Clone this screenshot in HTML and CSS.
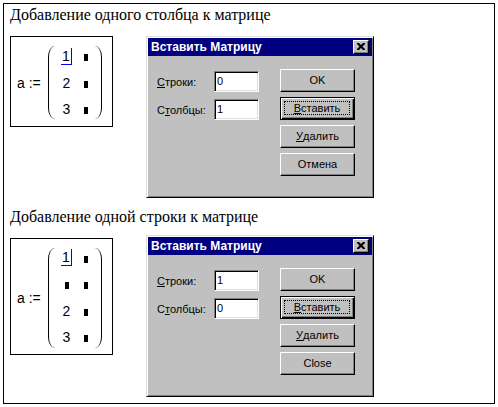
FILE: index.html
```html
<!DOCTYPE html>
<html lang="ru">
<head>
<meta charset="utf-8">
<title>Вставить Матрицу</title>
<link rel="stylesheet" href="styles.css">
</head>
<body>
<div class="frame">
  <section class="example">
    <p class="heading">Добавление одного столбца к матрице</p>
    <div class="row">
      <div class="region">
        <span class="lhs">a :=</span>
        <div class="matrix">
          <div class="paren paren--left"></div>
          <div class="cells">
            <span class="cell"><span class="cursor">1</span></span><span class="cell cell--ph"><i class="ph"></i></span>
            <span class="cell">2</span><span class="cell cell--ph"><i class="ph"></i></span>
            <span class="cell">3</span><span class="cell cell--ph"><i class="ph"></i></span>
          </div>
          <div class="paren paren--right"></div>
        </div>
      </div>
      <div class="dialog">
        <div class="titlebar">
          <span class="title">Вставить Матрицу</span>
          <span class="close"><svg width="8" height="7" viewBox="0 0 8 7"><path d="M0 0h2l2 2 2-2h2v1l-2.5 2.5L8 6v1H6L4 5 2 7H0V6l2.5-2.5L0 1z" fill="#000"/></svg></span>
        </div>
        <div class="body">
          <div class="fields">
            <label class="field"><span class="label"><u>С</u>троки:</span><span class="input">0</span></label>
            <label class="field"><span class="label">С<u>т</u>олбцы:</span><span class="input">1</span></label>
          </div>
          <div class="buttons">
            <span class="btn">OK</span>
            <span class="btn btn--default"><span class="focus"><u>В</u>ставить</span></span>
            <span class="btn"><u>У</u>далить</span>
            <span class="btn">Отмена</span>
          </div>
        </div>
      </div>
    </div>
  </section>
  <section class="example example--second">
    <p class="heading">Добавление одной строки к матрице</p>
    <div class="row">
      <div class="region region--tall">
        <span class="lhs">a :=</span>
        <div class="matrix">
          <div class="paren paren--left"></div>
          <div class="cells">
            <span class="cell"><span class="cursor">1</span></span><span class="cell cell--ph"><i class="ph"></i></span>
            <span class="cell"><i class="ph"></i></span><span class="cell cell--ph"><i class="ph"></i></span>
            <span class="cell">2</span><span class="cell cell--ph"><i class="ph"></i></span>
            <span class="cell">3</span><span class="cell cell--ph"><i class="ph"></i></span>
          </div>
          <div class="paren paren--right"></div>
        </div>
      </div>
      <div class="dialog">
        <div class="titlebar">
          <span class="title">Вставить Матрицу</span>
          <span class="close"><svg width="8" height="7" viewBox="0 0 8 7"><path d="M0 0h2l2 2 2-2h2v1l-2.5 2.5L8 6v1H6L4 5 2 7H0V6l2.5-2.5L0 1z" fill="#000"/></svg></span>
        </div>
        <div class="body">
          <div class="fields">
            <label class="field"><span class="label"><u>С</u>троки:</span><span class="input">1</span></label>
            <label class="field"><span class="label">С<u>т</u>олбцы:</span><span class="input">0</span></label>
          </div>
          <div class="buttons">
            <span class="btn">OK</span>
            <span class="btn btn--default"><span class="focus"><u>В</u>ставить</span></span>
            <span class="btn"><u>У</u>далить</span>
            <span class="btn">Close</span>
          </div>
        </div>
      </div>
    </div>
  </section>
</div>
</body>
</html>
```
FILE: styles.css
```css
html, body {
  margin: 0;
  padding: 0;
  background: #fff;
}

.frame {
  margin: 3px;
  width: 492px;
  height: 401px;
  box-sizing: border-box;
  border: 1px solid #000;
  padding: 2px 6px 0 6px;
}

.example--second {
  margin-top: 10px;
}

.heading {
  margin: 0;
  font-family: "Liberation Serif", "Times New Roman", serif;
  font-size: 16px;
  line-height: 17px;
  color: #000;
}

.row {
  display: flex;
  align-items: flex-start;
  gap: 33px;
  margin-top: 13px;
}

.example--second .dialog {
  margin-top: -3px;
}

/* math region */
.region {
  width: 103px;
  height: 91px;
  box-sizing: border-box;
  border: 1px solid #000;
  display: flex;
  align-items: center;
  padding: 2px 0 0 6px;
  font-family: "Liberation Sans", Arial, sans-serif;
  font-size: 14px;
  color: #000;
}

.region--tall {
  height: 117px;
}

.lhs {
  width: 31px;
  white-space: pre;
}

.matrix {
  display: flex;
  align-items: stretch;
}

.paren {
  width: 7px;
  margin: 3px 0;
  box-sizing: border-box;
}

.paren--left {
  border-left: 1.2px solid #000;
  border-radius: 7px 0 0 7px / 11px 0 0 11px;
}

.paren--right {
  border-right: 1.2px solid #000;
  border-radius: 0 7px 7px 0 / 0 11px 11px 0;
}

.cells {
  display: grid;
  grid-template-columns: 23px 17px;
  grid-auto-rows: 26.5px;
  align-items: center;
}

.cell {
  display: flex;
  justify-content: center;
  align-items: center;
  line-height: 16px;
}

.cell--ph {
  justify-content: flex-start;
  padding-left: 6px;
}

.ph {
  display: block;
  width: 4px;
  height: 7px;
  margin-top: 3px;
  background: #000;
}

.cursor {
  border-bottom: 1px solid #0000ff;
  border-right: 1px solid #0000ff;
  padding: 0 1px 0 1px;
  line-height: 16px;
}

/* dialog */
.dialog {
  width: 228px;
  height: 162px;
  box-sizing: border-box;
  background: #c0c0c0;
  border-top: 1px solid #dfdfdf;
  border-left: 1px solid #dfdfdf;
  border-right: 1px solid #000;
  border-bottom: 1px solid #000;
  box-shadow: inset 1px 1px #fff, inset -1px -1px #808080;
  padding: 1px;
  font-family: "Liberation Sans", Arial, sans-serif;
  font-size: 11px;
  color: #000;
}

.titlebar {
  height: 18px;
  background: #000080;
  display: flex;
  align-items: center;
  justify-content: space-between;
  padding: 0 3px 0 3px;
}

.title {
  color: #fff;
  font-weight: bold;
  font-size: 12px;
}

.close {
  width: 16px;
  height: 14px;
  box-sizing: border-box;
  background: #c0c0c0;
  border-top: 1px solid #fff;
  border-left: 1px solid #fff;
  border-right: 1px solid #000;
  border-bottom: 1px solid #000;
  box-shadow: inset -1px -1px #808080;
  display: flex;
  align-items: center;
  justify-content: center;
  padding: 0 1px 1px 0;
}

.close svg {
  display: block;
}

.body {
  display: flex;
  padding: 13px 0 0 9px;
}

.fields {
  display: flex;
  flex-direction: column;
  gap: 7px;
  margin-top: 2px;
  width: 123px;
}

.field {
  display: flex;
  align-items: center;
}

.label {
  width: 57px;
}

.input {
  width: 45px;
  height: 21px;
  box-sizing: border-box;
  background: #fff;
  border-top: 1px solid #808080;
  border-left: 1px solid #808080;
  border-right: 1px solid #fff;
  border-bottom: 1px solid #fff;
  box-shadow: inset 1px 1px #000, inset -1px -1px #dfdfdf;
  padding: 0 0 0 2px;
  line-height: 19px;
}

.buttons {
  display: flex;
  flex-direction: column;
  gap: 5px;
}

.btn {
  width: 75px;
  height: 23px;
  box-sizing: border-box;
  background: #c0c0c0;
  border-top: 1px solid #fff;
  border-left: 1px solid #fff;
  border-right: 1px solid #000;
  border-bottom: 1px solid #000;
  box-shadow: inset -1px -1px #808080;
  display: flex;
  align-items: center;
  justify-content: center;
  padding-bottom: 1px;
}

.btn--default {
  border: 1px solid #000;
  box-shadow: inset 1px 1px #fff, inset -1px -1px #000, inset -2px -2px #808080;
  padding: 3px 4px 4px 3px;
}

.focus {
  flex: 1;
  align-self: stretch;
  display: flex;
  align-items: center;
  justify-content: center;
  border: 1px dotted #000;
}
```
